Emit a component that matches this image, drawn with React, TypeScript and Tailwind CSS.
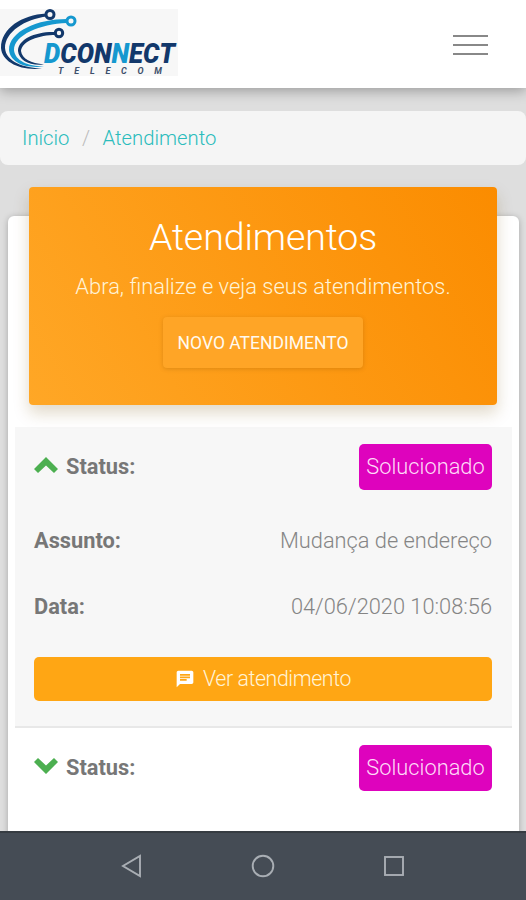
import { useState } from "react";
import { MdChat as ChatIcon } from "react-icons/md";

const tickets = [
  { id: 1, status: "Solucionado", subject: "Mudança de endereço", date: "04/06/2020 10:08:56" },
  { id: 2, status: "Solucionado", subject: "Mudança de endereço", date: "04/06/2020 10:08:56" },
];

function Logo() {
  return (
    <svg width="178" height="67" viewBox="0 9 178 67" className="bg-[#f7f7f7]">
      {/* Swooshes */}
      <path
        d="M46 13.5C22 15 1 28 1 48C2 62 20 71 42 68.5C24 68 6 62 5 48C5 32 25 19 47 16.5Z"
        fill="#12386b"
      />
      <path
        d="M67 19C38 19 9 31 9 50C10 61 23 69 44 66.5C28 66 15 61 14 50C14 35 40 24 67 23Z"
        fill="#1598cf"
      />
      <path
        d="M56 32C36 31 18 39 18 51C19 60 29 66 44 64.5C31 63 22 59 21 51C22 41 39 35 56 35Z"
        fill="#12386b"
      />
      <g fill="#f7f7f7" strokeWidth="3">
        <circle cx="50" cy="14.5" r="4" stroke="#12386b" />
        <circle cx="71" cy="21" r="4" stroke="#1598cf" />
        <circle cx="59" cy="33" r="3.7" stroke="#12386b" />
      </g>
      <text
        x="44"
        y="62.5"
        textLength="131"
        lengthAdjust="spacingAndGlyphs"
        fontSize="27"
        fontWeight="900"
        fontStyle="italic"
        fill="#12386b"
        className="font-['Roboto',sans-serif]"
      >
        <tspan fill="#1598cf">D</tspan>CON<tspan fill="#1598cf">N</tspan>ECT
      </text>
      <text
        x="58"
        y="74"
        textLength="104"
        fontSize="9"
        fontWeight="700"
        fontStyle="italic"
        fill="#3d4f6b"
        className="font-['Roboto',sans-serif]"
      >
        TELECOM
      </text>
    </svg>
  );
}

function Chevron({ open }: { open: boolean }) {
  return (
    <svg width="24" height="16" viewBox="0 0 24 16" className="relative -top-0.5" fill="#4caf50">
      <path d={open ? "M12 0L24 12L20 16L12 8.5L4 16L0 12Z" : "M12 16L24 4L20 0L12 7.5L4 0L0 4Z"} />
    </svg>
  );
}

function Header() {
  return (
    <header className="relative z-10 flex h-[88px] shrink-0 items-start justify-between bg-white pt-[9px] shadow-[0_3px_12px_rgba(0,0,0,0.3)]">
      <Logo />
      <button className="mt-[26px] mr-[38px] flex w-[35px] flex-col gap-[7px]">
        <span className="h-[2px] w-full bg-[#888]" />
        <span className="h-[2px] w-full bg-[#888]" />
        <span className="h-[2px] w-full bg-[#888]" />
      </button>
    </header>
  );
}

function NavigationBar() {
  return (
    <nav className="relative z-10 flex h-[69px] shrink-0 items-center justify-center border-t-2 border-[#363c42] bg-[#454c55] pb-px text-[#a9aeb4]">
      <svg width="290" height="26" viewBox="0 0 290 26" fill="none" stroke="currentColor" strokeWidth="1.9">
        <path d="M22 3V23L5 13Z" />
        <circle cx="145" cy="13" r="10.3" />
        <rect x="267" y="4" width="18" height="18" />
      </svg>
    </nav>
  );
}

export default function App() {
  const [openId, setOpenId] = useState<number | null>(1);

  return (
    <div className="flex h-[900px] w-[526px] flex-col overflow-hidden bg-[#dedede] font-['Roboto',sans-serif] font-light text-[#777]">
      <Header />

      <main className="min-h-0 flex-1 overflow-hidden">
        {/* Breadcrumb */}
        <div className="mt-[23px] flex h-[54px] items-center rounded-lg bg-[#f5f5f5] px-[22px] text-[20.3px] text-[#2bbcbc]">
          <a href="#">Início</a>
          <span className="px-[12.5px] text-[#bbb]">/</span>
          <a href="#">Atendimento</a>
        </div>

        <div className="mr-[7px] ml-2 mt-[51px] h-[700px] rounded-md bg-white px-[7px] shadow-[0_1px_6px_rgba(0,0,0,0.25)]">
          {/* Page title */}
          <section className="relative -top-[29px] mr-[15px] ml-[14px] flex h-[218px] flex-col items-center rounded bg-linear-60/srgb from-[#ffa726] to-[#fb8c00] pt-[26px] text-white shadow-[0_8px_16px_rgba(120,80,10,0.22)]">
            <h1 className="text-[37.5px] leading-[48px] tracking-[-0.1px]">Atendimentos</h1>
            <p className="mt-[11px] text-[21.9px] leading-[30px] text-[#fff3d6]">
              Abra, finalize e veja seus atendimentos.
            </p>
            <button className="mt-[15px] h-[51px] w-[200px] rounded-sm bg-[#ffa526] pt-0.5 text-[17.5px] font-normal text-[#fffaf0] shadow-[0_1px_4px_rgba(120,70,0,0.25)]">
              NOVO ATENDIMENTO
            </button>
          </section>

          {/* Tickets */}
          <div className="-mt-[7px]">
            {tickets.map((ticket) => {
              const open = ticket.id === openId;
              return (
                <article
                  key={ticket.id}
                  className={`border-b-2 pt-[17px] pr-5 pl-[19px] text-[21.8px] ${
                    open ? "h-[301px] border-[#e8e8e8] bg-[#f7f7f7]" : "border-transparent"
                  }`}
                >
                  <div className="flex h-[46px] items-center justify-between">
                    <button
                      onClick={() => setOpenId(open ? null : ticket.id)}
                      className="flex items-center gap-2 font-bold"
                    >
                      <Chevron open={open} />
                      Status:
                    </button>
                    <span className="flex h-[46px] w-[133px] items-center justify-center rounded-[5px] bg-[#de03bd] text-[#ffdcf8]">
                      {ticket.status}
                    </span>
                  </div>
                  {open && (
                    <>
                      <div className="mt-[34px] flex h-[34px] items-center justify-between">
                        <b className="font-bold">Assunto:</b>
                        <span className="text-[#858585]">{ticket.subject}</span>
                      </div>
                      <div className="mt-8 flex h-[34px] items-center justify-between">
                        <b className="font-bold">Data:</b>
                        <span className="text-[#858585]">{ticket.date}</span>
                      </div>
                      <button className="mt-[33px] flex h-[44px] w-full items-center justify-center gap-2 rounded-[5px] bg-[#ffa614] text-[21.3px] text-[#fff3d6]">
                        <ChatIcon size={20} className="text-white" />
                        <span className="tracking-[-0.4px]">Ver atendimento</span>
                      </button>
                    </>
                  )}
                </article>
              );
            })}
          </div>
        </div>
      </main>

      <NavigationBar />
    </div>
  );
}
